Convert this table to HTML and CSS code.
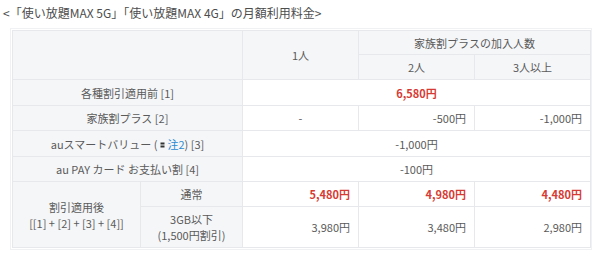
FILE: index.html
```html
<!DOCTYPE html>
<html lang="ja">
<head>
<meta charset="utf-8">
<title>料金表</title>
<link rel="stylesheet" href="styles.css">
</head>
<body>
<div class="title">&lt;「使い放題MAX 5G」「使い放題MAX 4G」の月額利用料金&gt;</div>
<div class="wrap">
<table class="price">
<colgroup>
<col class="c-a"><col class="c-b"><col class="c-n"><col class="c-n"><col class="c-n">
</colgroup>
<thead>
<tr class="h1">
<th colspan="2" rowspan="2"></th>
<th rowspan="2">1人</th>
<th colspan="2">家族割プラスの加入人数</th>
</tr>
<tr class="h2">
<th>2人</th>
<th>3人以上</th>
</tr>
</thead>
<tbody>
<tr class="r25">
<th colspan="2">各種割引適用前 [1]</th>
<td colspan="3" class="center red">6,580円</td>
</tr>
<tr>
<th colspan="2">家族割プラス [2]</th>
<td class="center">-</td>
<td>-500円</td>
<td>-1,000円</td>
</tr>
<tr class="r25">
<th colspan="2">auスマートバリュー ( <svg class="ico" width="5" height="6" viewBox="0 0 5 6"><rect x="0.5" y="0.5" width="4" height="2" fill="#333"/><rect x="0.5" y="3.5" width="4" height="2" fill="#333"/></svg> <a class="note">注2</a>) [3]</th>
<td colspan="3" class="center">-1,000円</td>
</tr>
<tr>
<th colspan="2">au PAY カード お支払い割 [4]</th>
<td colspan="3" class="center">-100円</td>
</tr>
<tr>
<th rowspan="2">割引適用後<br>[[1] + [2] + [3] + [4]]</th>
<th>通常</th>
<td class="red">5,480円</td>
<td class="red">4,980円</td>
<td class="red">4,480円</td>
</tr>
<tr class="tall">
<th>3GB以下<br>(1,500円割引)</th>
<td>3,980円</td>
<td>3,480円</td>
<td>2,980円</td>
</tr>
</tbody>
</table>
</div>
</body>
</html>
```

FILE: styles.css
```css
html, body {
  margin: 0;
  padding: 0;
  background: #ffffff;
}
body {
  font-family: "Noto Sans CJK JP", "Noto Sans", sans-serif;
  color: #5a5a5a;
}
.title {
  padding: 5px 0 0 3px;
  font-size: 12px;
  line-height: 16px;
  color: #4d4d4d;
  white-space: nowrap;
}
.wrap {
  margin: 7px 0 0 10px;
  width: 578px;
  border: 1px solid #f0f1f3;
  padding: 1px;
}
.price {
  width: 578px;
  table-layout: fixed;
  border-collapse: collapse;
  font-size: 11px;
  line-height: 16px;
}
.c-a { width: 128px; }
.c-b { width: 102px; }
.c-n { width: 116px; }
.price th, .price td {
  border: 1px solid #e6e8eb;
  padding: 0 8px;
  height: 24px;
  font-weight: normal;
  color: #5a5a5a;
}
.price th {
  background: #f5f6f8;
  text-align: center;
}
.price td {
  background: #fff;
  text-align: right;
}
.price thead tr.h1 th { height: 23px; }
.price thead tr.h2 th { height: 24px; }
.price tr.r25 th, .price tr.r25 td { height: 25px; }
.price td.center { text-align: center; }
.price td.red {
  color: #d63b33;
  font-weight: bold;
}
.price tr.tall th, .price tr.tall td { height: 40px; }
.ico {
  vertical-align: middle;
  margin: 0 0 1px 0;
}
.note {
  color: #2b8ad2;
}
```
